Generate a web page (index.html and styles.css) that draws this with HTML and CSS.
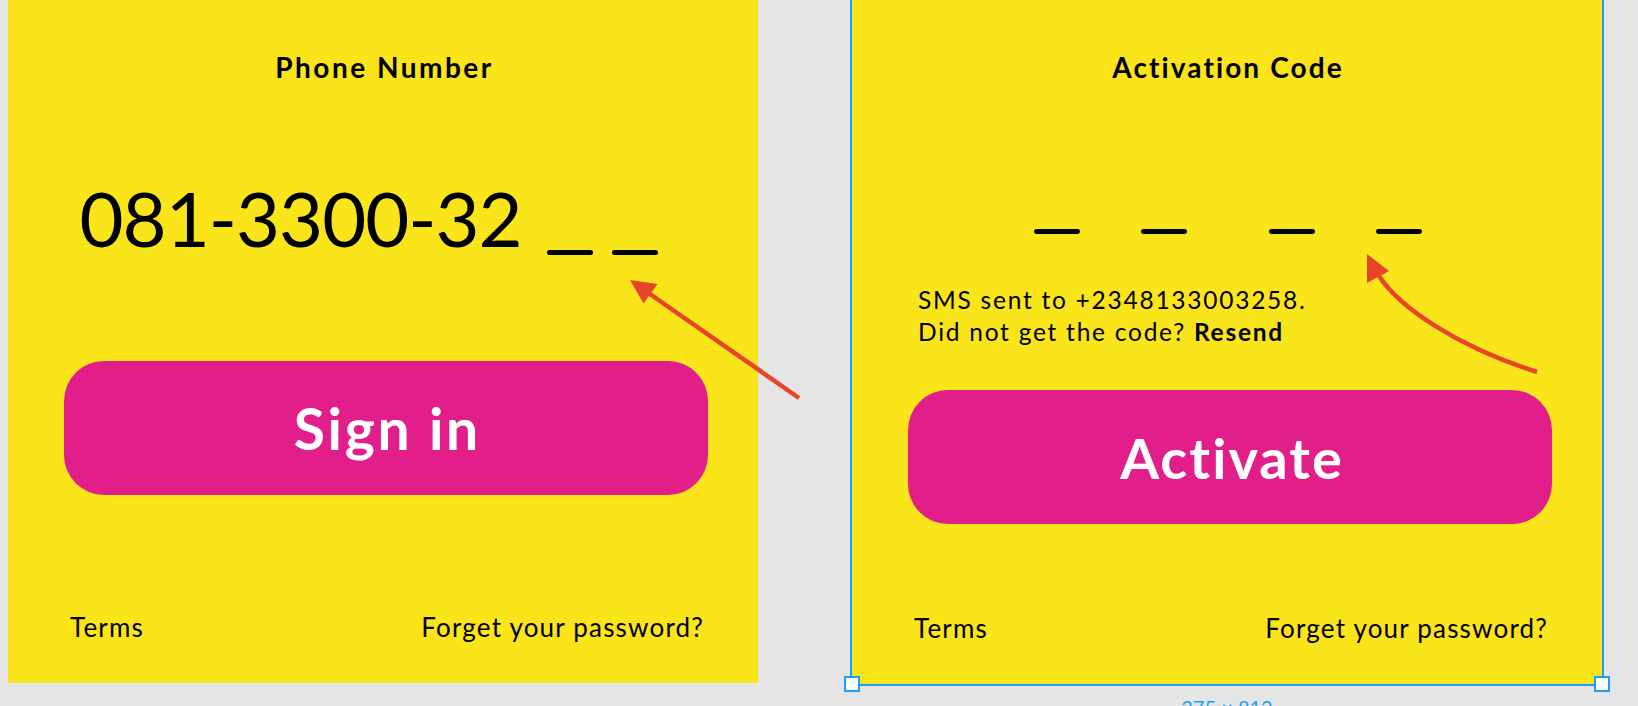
FILE: index.html
```html
<!DOCTYPE html>
<html lang="en">
<head>
<meta charset="utf-8">
<title>Sign in / Activation</title>
<link rel="stylesheet" href="styles.css">
</head>
<body>
<div class="canvas">
  <section class="screen">
    <h2 class="title title-phone">Phone Number</h2>
    <div class="phone">081-3300-32<span class="blank first"></span><span class="blank second"></span></div>
    <button class="btn btn-signin">Sign in</button>
    <div class="footer"><span>Terms</span><span>Forget your password?</span></div>
  </section>

  <section class="screen selected">
    <h2 class="title title-code">Activation Code</h2>
    <div class="code">
      <span class="dash d1"></span><span class="dash d2"></span><span class="dash d3"></span><span class="dash"></span>
    </div>
    <p class="sms">SMS sent to +2348133003258.<br>Did not get the code? <b>Resend</b></p>
    <button class="btn btn-activate">Activate</button>
    <div class="footer footer-activate"><span>Terms</span><span>Forget your password?</span></div>
    <span class="handle handle-left"></span>
    <span class="handle handle-right"></span>
    <span class="dims">375 × 812</span>
  </section>

  <svg class="arrows" width="1638" height="706" viewBox="0 0 1638 706">
    <line x1="799" y1="398" x2="647" y2="292" stroke="#E8432B" stroke-width="4.5"/>
    <polygon points="630,280 657.5,284 643.5,303.5" fill="#E8432B"/>
    <path d="M1537 372 C1458 347 1400 308 1379 276" fill="none" stroke="#E8432B" stroke-width="4.5"/>
    <polygon points="1367,254 1367,283 1389,271" fill="#E8432B"/>
  </svg>
</div>
</body>
</html>
```

FILE: styles.css
```css
html, body {
  margin: 0;
  padding: 0;
}

body {
  background: #e5e5e5;
  width: 1638px;
  height: 706px;
  overflow: hidden;
  font-family: Lato, "Liberation Sans", sans-serif;
  color: #000;
}

.canvas {
  position: relative;
  display: flex;
  align-items: flex-start;
  gap: 92px;
  padding-left: 8px;
  height: 706px;
}

.screen {
  position: relative;
  width: 750px;
  height: 683px;
  background: #fae41a;
  display: flex;
  flex-direction: column;
  flex: none;
}

.screen.selected {
  height: 684px;
  border: 2px solid #18a0fb;
  border-top: none;
}

.title {
  margin: 53px 0 0;
  font-size: 28px;
  line-height: 28px;
  font-weight: 700;
  text-align: center;
}

.title-phone {
  letter-spacing: 2.5px;
  padding-left: 3px;
}

.title-code {
  letter-spacing: 2.1px;
  padding-left: 2px;
}

.phone {
  margin-top: 99px;
  padding-left: 71.5px;
  font-size: 76px;
  line-height: 76px;
  font-weight: 400;
  letter-spacing: -1px;
  white-space: nowrap;
}

.blank {
  display: inline-block;
  width: 46px;
  height: 5.3px;
  background: #000;
  border-radius: 2.5px;
  vertical-align: baseline;
  margin-bottom: -8px;
}

.blank.first { margin-left: 25px; }
.blank.second { margin-left: 19.6px; }

.btn {
  margin: 105px 0 0 56px;
  width: 644px;
  height: 134px;
  border: none;
  border-radius: 40px;
  background: #e21e8a;
  color: #fff;
  font-family: Lato, "Liberation Sans", sans-serif;
  font-size: 57px;
  font-weight: 700;
  display: flex;
  align-items: center;
  justify-content: center;
  padding: 0;
}

.btn-signin {
  letter-spacing: 2.7px;
  padding-left: 2.7px;
}

.footer {
  margin-top: 118.6px;
  display: flex;
  justify-content: space-between;
  padding: 0 53.8px 0 62px;
  font-size: 26px;
  line-height: 26px;
  letter-spacing: 1.2px;
}

.code {
  margin-top: 148px;
  padding-left: 182px;
  display: flex;
  height: 4.7px;
}

.dash {
  width: 46px;
  height: 4.7px;
  background: #000;
  border-radius: 2.4px;
  flex: none;
}

.d1 { margin-right: 61px; }
.d2 { margin-right: 81.7px; }
.d3 { margin-right: 61px; }

.sms {
  margin: 50px 0 0;
  padding-left: 66px;
  font-size: 24.5px;
  line-height: 32.4px;
  letter-spacing: 1.75px;
}

.sms b { font-weight: 700; }

.btn-activate {
  margin-top: 41.6px;
  font-size: 56px;
  letter-spacing: 2px;
  padding-left: 4px;
}

.footer-activate {
  margin-top: 90.6px;
}

.handle {
  position: absolute;
  width: 16px;
  height: 16px;
  box-sizing: border-box;
  border: 2px solid #18a0fb;
  background: #fff;
  bottom: -8px;
}

.handle-left { left: -8px; }
.handle-right { right: -8px; }

.dims {
  position: absolute;
  top: calc(100% + 12.6px);
  left: 0;
  right: 0;
  text-align: center;
  font-size: 20px;
  line-height: 20px;
  color: #18a0fb;
}

.arrows {
  position: absolute;
  left: 0;
  top: 0;
  pointer-events: none;
}
```
